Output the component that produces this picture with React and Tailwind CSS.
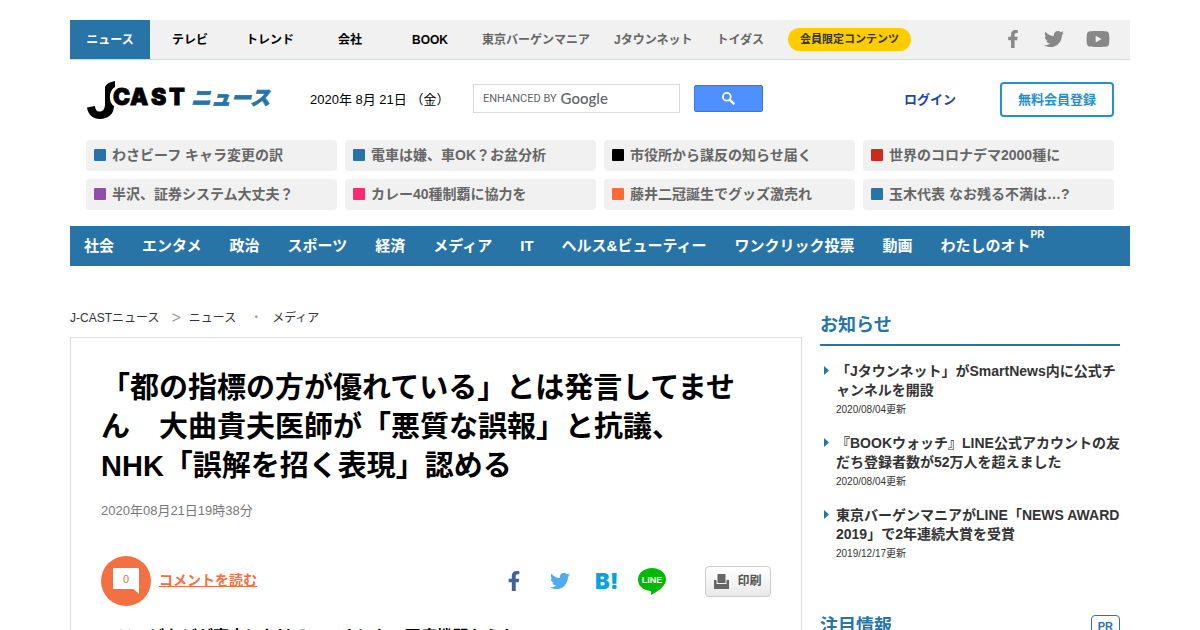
import { FaFacebookF, FaTwitter, FaYoutube } from "react-icons/fa";

const sites = [
  { label: "ニュース", cls: "w-20 bg-[#2974a7] text-white" },
  { label: "テレビ", cls: "w-20 text-black" },
  { label: "トレンド", cls: "w-20 text-black" },
  { label: "会社", cls: "w-20 text-black" },
  { label: "BOOK", cls: "w-20 text-black" },
  { label: "東京バーゲンマニア", cls: "px-3 text-[#666]" },
  { label: "Jタウンネット", cls: "px-3 text-[#666]" },
  { label: "トイダス", cls: "px-3 text-[#666]" },
];

const topics = [
  { label: "わさビーフ キャラ変更の訳", color: "bg-[#2974a7]" },
  { label: "電車は嫌、車OK？お盆分析", color: "bg-[#2974a7]" },
  { label: "市役所から謀反の知らせ届く", color: "bg-black" },
  { label: "世界のコロナデマ2000種に", color: "bg-[#cc2a1a]" },
  { label: "半沢、証券システム大丈夫？", color: "bg-[#8e4fab]" },
  { label: "カレー40種制覇に協力を", color: "bg-[#fb2a72]" },
  { label: "藤井二冠誕生でグッズ激売れ", color: "bg-[#ff6a3a]" },
  { label: "玉木代表 なお残る不満は…?", color: "bg-[#2974a7]" },
];

const sections = [
  "社会", "エンタメ", "政治", "スポーツ", "経済", "メディア", "IT",
  "ヘルス&ビューティー", "ワンクリック投票", "動画",
];

const notices = [
  { title: "「Jタウンネット」がSmartNews内に公式チャンネルを開設", date: "2020/08/04更新" },
  { title: "『BOOKウォッチ』LINE公式アカウントの友だち登録者数が52万人を超えました", date: "2020/08/04更新" },
  { title: "東京バーゲンマニアがLINE「NEWS AWARD 2019」で2年連続大賞を受賞", date: "2019/12/17更新" },
];

const lead = "　テレビなどが東京におけるコロナにも、医療機関からも";

function Logo() {
  return (
    <svg viewBox="0 0 186 40" className="h-10 w-[186px]" role="img" aria-label="J-CAST ニュース">
      <path d="M29 1C24 2 20 4 19 7V24C19 29 17 31.500 13.500 31.500C10.500 31.500 9 29.500 9 26L1 27.500C2 34.500 7 39 14 39C22 39 28 34 28 26C25 24 23.500 20 24 15C24.500 11 27 8 29 7Z" />
      <text x="27 44 65 83" y="24.500" fontFamily="Inter" fontWeight="900" fontSize="23" stroke="#000" strokeWidth="0.800">CAST</text>
      <text x="105" y="25" fill="#2974a7" stroke="#2974a7" strokeWidth="0.700" fontFamily="Noto Sans CJK JP" fontWeight="900" fontStyle="italic" fontSize="20">ニュース</text>
    </svg>
  );
}

function GoogleBrand() {
  return (
    <span className="pointer-events-none absolute inset-y-0 left-[10px] flex items-center gap-1 text-[#5f6368]">
      <span className="pt-[2px] font-[Roboto] text-[11px]">ENHANCED BY</span>
      <span className="font-[Lato] text-[15px] font-medium">Google</span>
    </span>
  );
}

export default function App() {
  return (
    <div className="h-screen overflow-hidden bg-white font-['Liberation_Sans','Noto_Sans_CJK_JP',sans-serif] text-[#333]">
      <div className="mx-auto max-w-[1060px] pt-5">
        <header>
          <div className="flex h-10 items-center border-b border-[#d5dada] bg-[#f1f1f1] pr-5 text-xs font-bold">
            <nav aria-label="サイト" className="flex h-full items-center">
              {sites.map((s) => (
                <a key={s.label} href="#" className={`flex h-full items-center justify-center whitespace-nowrap ${s.cls}`}>
                  {s.label}
                </a>
              ))}
            </nav>
            <a href="#" className="ml-3 rounded-full bg-[#ffcc00] px-3 text-[11px] leading-[23px] whitespace-nowrap text-[#333]">
              会員限定コンテンツ
            </a>
            <div className="ml-auto flex items-center gap-[22px] pb-[2px] text-[#888]">
              <a href="#" aria-label="Facebook"><FaFacebookF size={18} /></a>
              <a href="#" aria-label="Twitter"><FaTwitter size={20} /></a>
              <a href="#" aria-label="YouTube"><FaYoutube size={24} /></a>
            </div>
          </div>

          <div className="flex h-20 items-center px-4 text-[13px]">
            <a href="#"><Logo /></a>
            <time className="ml-[38px] w-[139px] whitespace-nowrap text-black">2020年 8月 21日 （金）</time>
            <form className="mb-1 ml-6 flex items-center" onSubmit={(e) => e.preventDefault()}>
              <label className="relative block">
                <GoogleBrand />
                <input type="text" aria-label="検索" className="block h-[29px] w-[207px] border border-[#d9d9d9] bg-transparent px-2" />
              </label>
              <button type="submit" aria-label="検索する" className="ml-[14px] flex h-[27px] w-[69px] items-center justify-center rounded-[2px] border border-[#3079ed] bg-[#4d90fe] text-white">
                <svg viewBox="0 0 13 13" className="h-[13px] w-[13px]" fill="none" stroke="currentColor" aria-hidden="true">
                  <circle cx="4.800" cy="4.800" r="3.900" strokeWidth="1.800" />
                  <path d="M7.600 7.600L12.200 12.200" strokeWidth="2.400" />
                </svg>
              </button>
            </form>
            <a href="#" className="ml-auto font-bold whitespace-nowrap text-[#1a47a8]">ログイン</a>
            <a href="#" className="mb-[2px] ml-11 rounded border-2 border-[#2490cc] px-4 leading-[31px] font-bold whitespace-nowrap text-[#2490cc]">
              無料会員登録
            </a>
          </div>

          <ul className="grid grid-cols-4 gap-2 px-4">
            {topics.map((t) => (
              <li key={t.label}>
                <a href="#" className="flex h-[31px] items-center gap-[6px] rounded bg-[#f1f1f1] px-2 pb-[2px] text-sm font-bold whitespace-nowrap text-[#666]">
                  <span className={`h-3 w-3 rounded-[1px] ${t.color}`} />
                  {t.label}
                </a>
              </li>
            ))}
          </ul>

          <nav aria-label="カテゴリー" className="mt-4 flex h-10 items-center gap-7 bg-[#2974a7] px-[14px] text-[15px] font-bold whitespace-nowrap text-white">
            {sections.map((s) => <a key={s} href="#">{s}</a>)}
            <a href="#" className="relative">
              わたしのオト
              <span className="absolute -top-2 left-[90px] text-[10px]">PR</span>
            </a>
          </nav>
        </header>

        <div className="mt-10 flex items-start gap-[18px]">
          <main className="min-w-0 flex-1">
            <nav aria-label="パンくず" className="flex h-[31px] items-center pb-2 text-xs">
              <a href="#">J-CASTニュース</a>
              <span className="mx-2 pl-1 text-base text-[#999]">&gt;</span>
              <a href="#">ニュース</a>
              <span className="mr-[10px] ml-[14px] text-[#999]">・</span>
              <a href="#">メディア</a>
            </nav>

            <article className="border border-[#ddd] px-[30px] pt-[31px]">
              <h1 className="pr-[30px] text-[29px] leading-[39px] font-bold text-black">
                「都の指標の方が優れている」とは発言してません　大曲貴夫医師が「悪質な誤報」と抗議、NHK「誤解を招く表現」認める
              </h1>
              <time className="mt-[15px] block text-[13px] leading-5 text-[#777]">2020年08月21日19時38分</time>

              <div className="mt-[35px] flex h-[50px] items-center">
                <a href="#" className="flex items-center gap-2 text-sm font-bold text-[#f37042]">
                  <span className="relative flex h-[50px] w-[50px] items-center justify-center rounded-full bg-[#f37042]">
                    <svg viewBox="0 0 26 26" className="absolute h-[26px] w-[26px]" aria-hidden="true">
                      <path d="M1 0H25Q26 0 26 1V26L20.500 21H1Q0 21 0 20V1Q0 0 1 0Z" fill="#fff" />
                    </svg>
                    <span className="relative pb-[2px] text-[11px] font-normal">0</span>
                  </span>
                  <span className="pb-[2px] underline">コメントを読む</span>
                </a>
                <div className="ml-auto flex items-center">
                  <a href="#" aria-label="Facebookでシェア" className="text-[#43609c]"><FaFacebookF size={20} /></a>
                  <a href="#" aria-label="Twitterでシェア" className="ml-[26px] text-[#50abf1]"><FaTwitter size={20} /></a>
                  <a href="#" aria-label="はてなブックマーク" className="ml-6">
                    <svg viewBox="0 0 24 28" className="h-7 w-6" aria-hidden="true">
                      <text x="1 16" y="22" fill="#00a4de" fontFamily="Inter" fontWeight="900" fontSize="22">B!</text>
                    </svg>
                  </a>
                  <a href="#" aria-label="LINEで送る" className="ml-5">
                    <svg viewBox="0 0 28 27" className="h-[27px] w-7" aria-hidden="true">
                      <path fill="#00b900" d="M14 0C6 0 0 5 0 11.500C0 18 5 22 12.500 23C13.500 23.300 13 25 13 27C20 23.500 28 18 28 11.500C28 5 22 0 14 0Z" />
                      <text x="14" y="15" textAnchor="middle" fill="#fff" fontSize="9" fontWeight="700" fontFamily="Liberation Sans">LINE</text>
                    </svg>
                  </a>
                  <button type="button" className="ml-[39px] flex h-[31px] w-[66px] items-center justify-center gap-2 rounded border border-[#ccc] bg-linear-to-b from-white to-[#e9e9e9] text-xs font-bold text-[#555]">
                    <svg viewBox="0 0 15 15" className="h-[15px] w-[15px]" fill="#666" aria-hidden="true">
                      <path d="M3.500 0H11.500V9H3.500ZM0 6H2.500V10H12.500V6H15V15H0Z" />
                    </svg>
                    印刷
                  </button>
                </div>
              </div>

              <p className="mt-[17px] text-base leading-7 font-bold text-black">{lead}</p>
            </article>
          </main>

          <aside className="mr-[10px] w-[300px] shrink-0">
            <section>
              <h2 className="border-b-2 border-[#2974a7] pt-[6px] pb-[5px] text-lg leading-[27px] font-bold text-[#2974a7]">お知らせ</h2>
              <ul className="mt-4 space-y-[15px]">
                {notices.map((n) => (
                  <li key={n.title} className="flex">
                    <svg viewBox="0 0 16 16" className="mt-[1px] h-4 w-4 shrink-0" fill="#2974a7" aria-hidden="true">
                      <path d="M4 3L9 7.500L4 12Z" />
                    </svg>
                    <div>
                      <a href="#" className="block text-sm leading-[19px] font-bold">{n.title}</a>
                      <time className="block text-[10px] leading-[19px]">{n.date}</time>
                    </div>
                  </li>
                ))}
              </ul>
            </section>
            <section className="mt-[50px] flex items-center justify-between border-b-2 border-[#2974a7] pb-2">
              <h2 className="text-lg leading-[27px] font-bold text-[#2974a7]">注目情報</h2>
              <span className="rounded border border-[#2974a7] px-[6px] text-[11px] leading-[21px] font-bold text-[#2974a7]">PR</span>
            </section>
          </aside>
        </div>
      </div>
    </div>
  );
}
